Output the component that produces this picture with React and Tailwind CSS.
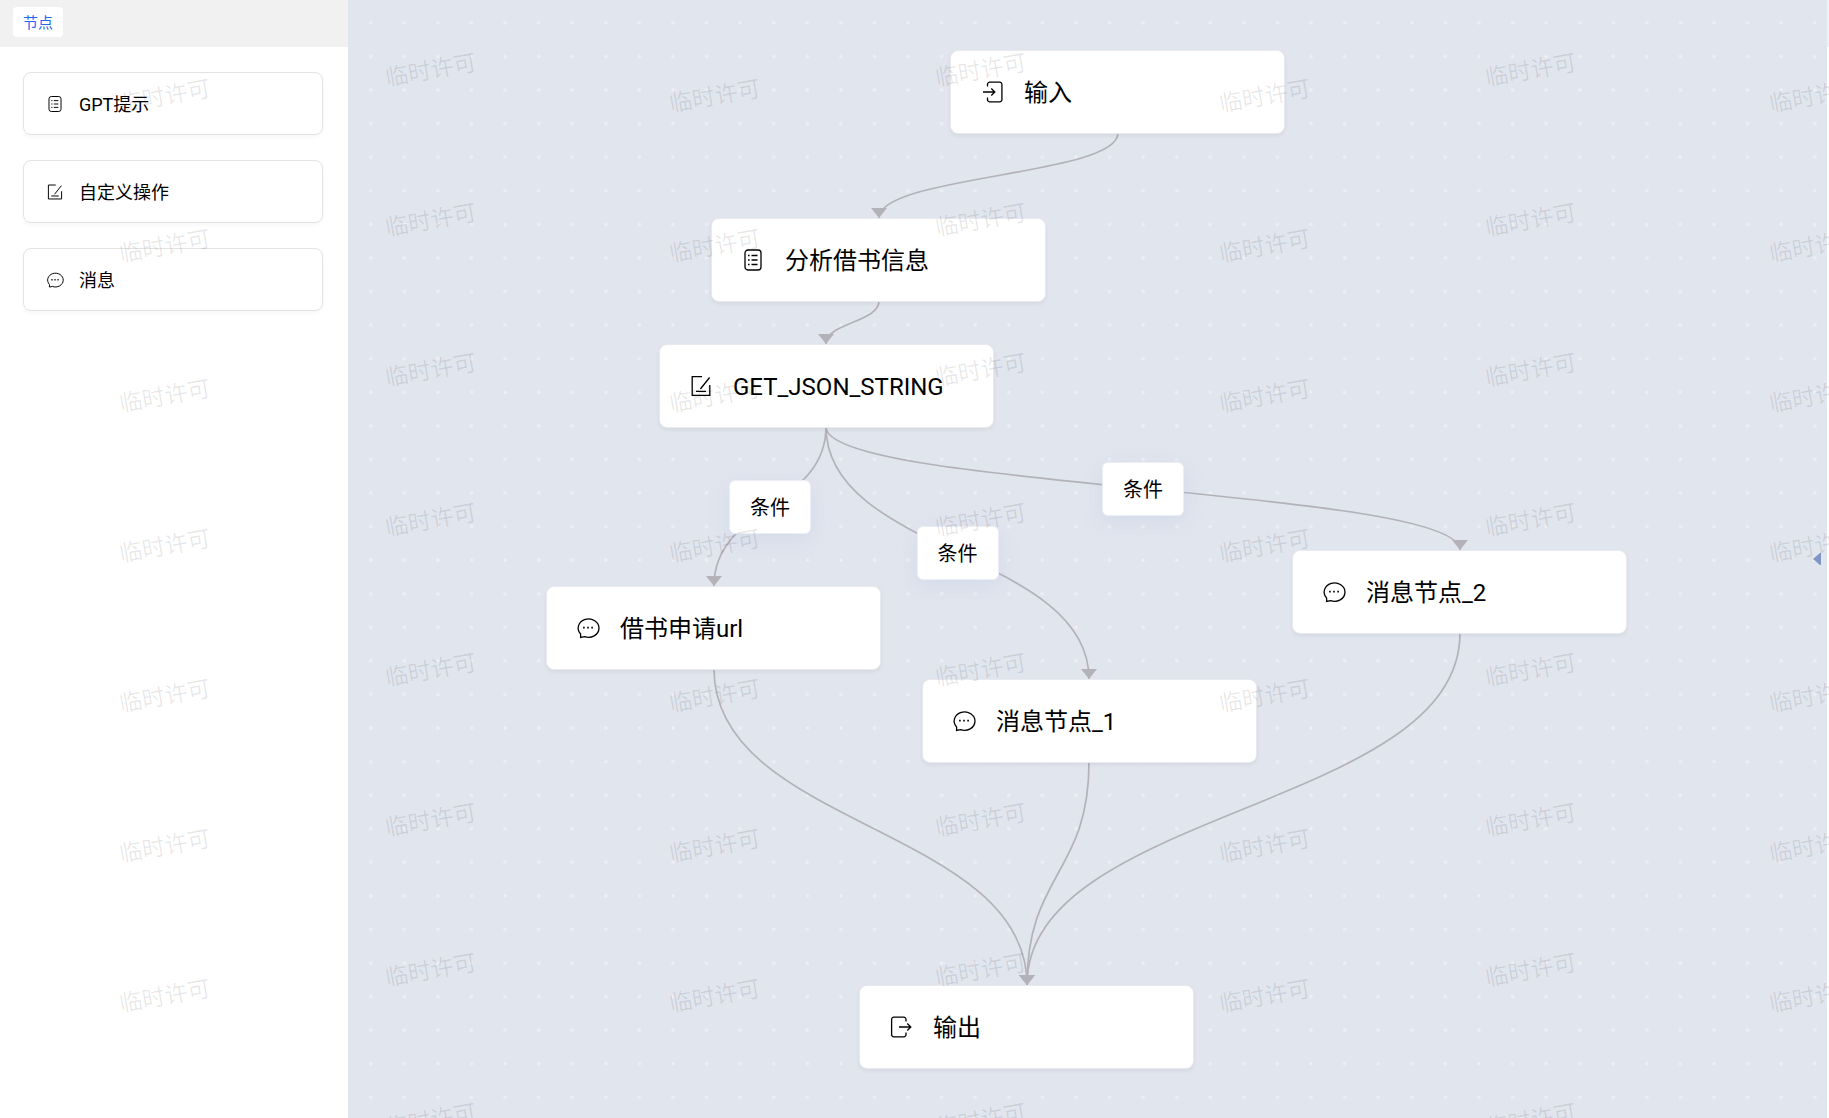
import React from "react";

const FONT = "font-[Roboto,'Noto_Sans_CJK_SC',sans-serif]";

const shapes = {
  list: (
    <>
      <rect x="4" y="2" width="16" height="20" rx="3" />
      <path d="M10.5 7.5h6M10.5 12h6M10.5 16.5h6M7 7.5h1.6M7 12h1.6M7 16.5h1.6" />
    </>
  ),
  edit: <path d="M13 2.7H3.2v18.6h17.6V11M20.6 3.5L11.4 15M7 17.3h10" />,
  message: (
    <>
      <path d="M4.6 18A10.4 9.2 0 1 1 8.6 20.6L4.6 21.4z" />
      <path d="M7.1 11.6h1.6M11.2 11.6h1.6M15.3 11.6h1.6" strokeWidth="1.8" />
    </>
  ),
  enter: (
    <>
      <path d="M7.5 6.5v-2a2.2 2.2 0 0 1 2.2-2.3h10a2.2 2.2 0 0 1 2.2 2.3v15a2.2 2.2 0 0 1-2.2 2.3h-10a2.2 2.2 0 0 1-2.2-2.3v-2" />
      <path d="M3 12h11.5M11.3 8.5l3.5 3.5-3.5 3.5" />
    </>
  ),
  exit: (
    <>
      <path d="M17 6.5v-2a2.2 2.2 0 0 0-2.2-2.3h-10a2.2 2.2 0 0 0-2.2 2.3v15a2.2 2.2 0 0 0 2.2 2.3h10a2.2 2.2 0 0 0 2.2-2.3v-2" />
      <path d="M10 12h11.8M18.3 8.5l3.5 3.5-3.5 3.5" />
    </>
  ),
};

function Icon({ name, className }) {
  return (
    <svg
      viewBox="0 0 24 24"
      className={className}
      fill="none"
      stroke="currentColor"
      strokeWidth="1.3"
      aria-hidden="true"
    >
      {shapes[name]}
    </svg>
  );
}

const palette = [
  { icon: "list", label: "GPT提示" },
  { icon: "edit", label: "自定义操作" },
  { icon: "message", label: "消息" },
];

const nodes = [
  { icon: "enter", label: "输入", x: 602, y: 50 },
  { icon: "list", label: "分析借书信息", x: 363, y: 218 },
  { icon: "edit", label: "GET_JSON_STRING", x: 311, y: 344 },
  { icon: "message", label: "借书申请url", x: 198, y: 586 },
  { icon: "message", label: "消息节点_1", x: 574, y: 679 },
  { icon: "message", label: "消息节点_2", x: 944, y: 550 },
  { icon: "exit", label: "输出", x: 511, y: 985 },
];

const edges = [
  [770, 133, 531, 218],
  [531, 301, 478, 344],
  [478, 427, 366, 586, "条件"],
  [478, 427, 741, 679, "条件"],
  [478, 427, 1112, 550, "条件"],
  [366, 669, 679, 985],
  [741, 762, 679, 985],
  [1112, 633, 679, 985],
];

function Edge({ edge: [x1, y1, x2, y2] }) {
  const mid = (y1 + y2) / 2;
  return (
    <>
      <path
        d={`M${x1} ${y1}C${x1} ${mid} ${x2} ${mid} ${x2} ${y2}`}
        fill="none"
        stroke="#b3b2b9"
        strokeWidth="1.7"
      />
      <path d={`M${x2 - 8} ${y2 - 10}h16l-8 10z`} fill="#b3b2b9" />
    </>
  );
}

function Canvas() {
  return (
    <main className="relative min-w-0 flex-1 overflow-hidden bg-[#e1e5ee]">
      <svg className="absolute inset-0 h-full w-full" aria-hidden="true">
        <defs>
          <pattern
            id="dots"
            width="20"
            height="20"
            patternUnits="userSpaceOnUse"
            patternTransform="translate(6 6) scale(1.679)"
          >
            <circle cx="10" cy="10" r="1.1" fill="#eeeff5" />
          </pattern>
        </defs>
        <rect width="100%" height="100%" fill="url(#dots)" />
        {edges.map((edge) => (
          <Edge key={edge.join()} edge={edge} />
        ))}
      </svg>
      {edges
        .filter((edge) => edge[4])
        .map(([x1, y1, x2, y2, label]) => (
          <button
            key={x2}
            type="button"
            className="absolute -translate-x-1/2 -translate-y-1/2 rounded-md border border-[#ebeef5] bg-white px-5 pt-[13px] pb-[11px] text-xl leading-7 text-black shadow-[0_6px_20px_rgba(170,190,225,0.25)]"
            style={{ left: (x1 + x2) / 2, top: Math.round((y1 + y2) / 2) }}
          >
            {label}
          </button>
        ))}
      {nodes.map(({ icon, label, x, y }) => (
        <div
          key={label}
          className="absolute flex h-[84px] w-[335px] items-center gap-5 rounded-lg border border-[#e8eaef] bg-white pl-[29px] text-2xl text-black shadow-[0_2px_4px_rgba(0,0,0,0.06)]"
          style={{ left: x, top: y }}
        >
          <Icon name={icon} className="size-6 shrink-0" />
          <span className="pt-0.5">{label}</span>
        </div>
      ))}
      <button
        type="button"
        aria-label="展开"
        className="absolute top-1/2 right-[6px] -translate-y-1/2"
      >
        <svg width="8" height="12" viewBox="0 0 8 12" aria-hidden="true">
          <path d="M8 0v12H7L0 6l7-6z" fill="#7f95c5" />
        </svg>
      </button>
    </main>
  );
}

function Sidebar() {
  return (
    <aside className="w-[348px] shrink-0 bg-white">
      <header className="flex h-[47px] items-start bg-[#f1f1f1] px-[13px] py-[7px]">
        <button
          type="button"
          className="h-[30px] rounded bg-white px-[10px] pt-0.5 text-[15px] leading-6 text-[#2468f2]"
        >
          节点
        </button>
      </header>
      <ul className="flex flex-col gap-[25px] px-[23px] py-[25px]">
        {palette.map(({ icon, label }) => (
          <li
            key={label}
            className="flex h-[63px] w-[300px] items-center gap-[15px] rounded-lg border border-[#e3e3e3] bg-white pl-[22px] text-lg text-black shadow-[0_2px_4px_rgba(0,0,0,0.04)]"
          >
            <Icon name={icon} className="size-[18px] shrink-0" />
            <span className="pt-0.5">{label}</span>
          </li>
        ))}
      </ul>
    </aside>
  );
}

function Watermark() {
  const marks = [];
  for (let row = 0; row < 8; row += 1) {
    for (let col = 0; col < 4; col += 1) {
      marks.push([165 + col * 550, 97 + row * 150]);
      marks.push([431 + col * 550, 71 + row * 150]);
    }
  }
  return (
    <div
      aria-hidden="true"
      className="pointer-events-none absolute inset-0 overflow-hidden text-black/10"
    >
      {marks.map(([left, top]) => (
        <span
          key={`${left}-${top}`}
          className="absolute -translate-x-1/2 -translate-y-1/2 -rotate-10 text-[23px] leading-8 font-[350] whitespace-nowrap"
          style={{ left, top }}
        >
          临时许可
        </span>
      ))}
    </div>
  );
}

export default function App() {
  return (
    <div className={`relative flex min-h-screen overflow-hidden ${FONT}`}>
      <Sidebar />
      <Canvas />
      <aside className="w-[2px] shrink-0 bg-white">
        <div className="h-[47px] bg-[#f1f1f1]" />
      </aside>
      <Watermark />
    </div>
  );
}
